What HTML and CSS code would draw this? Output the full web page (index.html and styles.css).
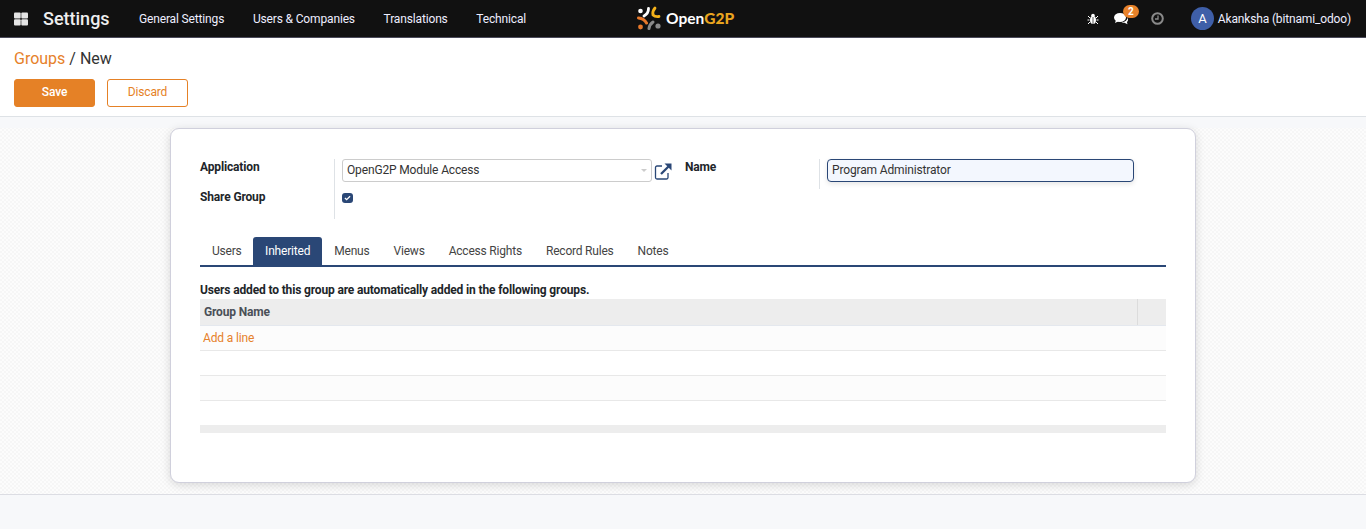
FILE: index.html
```html
<!doctype html>
<html>
	<head>
		<meta charset="utf-8">
		<title>Groups / New</title>
		<link rel="stylesheet" href="styles.css">
	</head>
	<body>
		<!-- Top bar -->
		<header class="navbar">
			<div class="nav-left">
				<svg class="apps-icon" width="16" height="14" viewBox="0 0 16 14"><rect x="1" y="0.500" width="6.700" height="6" rx="1"/><rect x="8.300" y="0.500" width="6.700" height="6" rx="1"/><rect x="1" y="7.300" width="6.700" height="6.200" rx="1"/><rect x="8.300" y="7.300" width="6.700" height="6.200" rx="1"/></svg>
				<span class="app-name">Settings</span>
				<ul class="nav-menu">
					<li>General Settings</li>
					<li>Users &amp; Companies</li>
					<li>Translations</li>
					<li>Technical</li>
				</ul>
			</div>
			<div class="nav-logo">
				<svg width="25" height="24" viewBox="0 0 25 24" fill="none" stroke-linecap="round">
					<circle cx="3.500" cy="5" r="2.300" fill="#fff"/>
					<path d="M11.500 2.500Q11.500 7.500 7 10" stroke="#fff" stroke-width="2.800"/>
					<path d="M18 2Q15 5.500 16 9Q18 11 22 10.500" stroke="#f5b21a" stroke-width="2.800"/>
					<path d="M1.500 12Q7 12.500 9.500 17" stroke="#e8792b" stroke-width="3"/>
					<circle cx="3.500" cy="21" r="2.400" fill="#e8792b"/>
					<path d="M16 16Q12.500 18.500 12 22.500" stroke="#8a8a8a" stroke-width="3"/>
					<circle cx="21" cy="20" r="2.600" fill="#8a8a8a"/>
				</svg>
				<span class="logo-text">Open<b>G2P</b></span>
			</div>
			<div class="nav-right">
				<svg class="bug-icon" width="12" height="12" viewBox="0 0 12 12" fill="#fff"><ellipse cx="6" cy="7" rx="3" ry="4"/><circle cx="6" cy="2.600" r="1.800"/><path d="M1 3l2 2M11 3L9 5M.5 7h2M11.500 7h-2M1 11l2-2M11 11L9 9" stroke="#fff" stroke-width="1"/><path d="M6 4v7" stroke="#111" stroke-width=".7"/></svg>
				<div class="chat">
					<svg width="15" height="13" viewBox="0 0 15 13" fill="#fff"><ellipse cx="6" cy="5.500" rx="6" ry="4.500"/><path d="M2 8 L1 11 L5 9z"/><path d="M13.500 5.500c1 2 .6 3.500-.6 4.500l.6 2.200-3-1.500c-1 .2-2 .1-3-.3 3 0 6-2 6-4.900z"/></svg>
					<span class="badge">2</span>
				</div>
				<svg class="clock-icon" width="13" height="13" viewBox="0 0 13 13" fill="none" stroke="#8a8a8a"><circle cx="6.500" cy="6.500" r="5.300" stroke-width="2"/><path d="M7 3.500v3.500H4" stroke-width="1.300"/></svg>
				<div class="user">
					<span class="avatar">A</span>
					<span>Akanksha (bitnami_odoo)</span>
				</div>
			</div>
		</header>

		<!-- Breadcrumb and buttons -->
		<section class="control-panel">
			<div class="breadcrumb"><a>Groups</a> / New</div>
			<div class="buttons">
				<button class="btn btn-primary">Save</button>
				<button class="btn btn-secondary">Discard</button>
			</div>
		</section>

		<!-- Form -->
		<main class="content">
			<article class="sheet">
				<div class="groups">
					<div class="group group-left">
						<div class="labels">
							<label>Application</label>
							<label>Share Group</label>
						</div>
						<div class="fields">
							<div class="field-line">
								<div class="select">OpenG2P Module Access<i class="caret"></i></div>
								<svg class="ext-link" width="18" height="18" viewBox="0 0 18 18" fill="none" stroke="#2a4776"><path d="M8 4H3a1.500 1.500 0 0 0-1.500 1.500v10A1.500 1.500 0 0 0 3 17h9.500a1.500 1.500 0 0 0 1.500-1.500V11" stroke-width="1.300"/><path d="M7 12L15 4" stroke-width="2.300"/><path d="M10.500 1.500h7v7z" fill="#2a4776" stroke="none"/></svg>
							</div>
							<span class="checkbox"><svg width="7" height="6" viewBox="0 0 8 7" fill="none" stroke="#fff" stroke-width="1.500"><path d="M1 3.500l2 2 4-4"/></svg></span>
						</div>
					</div>
					<div class="group group-right">
						<div class="labels"><label>Name</label></div>
						<div class="fields">
							<input class="name-input" type="text" value="Program Administrator">
						</div>
					</div>
				</div>

				<ul class="tabs">
					<li>Users</li>
					<li class="active">Inherited</li>
					<li>Menus</li>
					<li>Views</li>
					<li>Access Rights</li>
					<li>Record Rules</li>
					<li>Notes</li>
				</ul>

				<p class="tab-note">Users added to this group are automatically added in the following groups.</p>
				<table class="lines">
					<thead>
						<tr><th>Group Name</th><th class="col-trash"></th></tr>
					</thead>
					<tbody>
						<tr><td colspan="2"><a>Add a line</a></td></tr>
						<tr><td colspan="2"></td></tr>
						<tr><td colspan="2"></td></tr>
						<tr><td colspan="2"></td></tr>
					</tbody>
					<tfoot>
						<tr><td colspan="2"></td></tr>
					</tfoot>
				</table>
			</article>
		</main>
		<div class="bottom-strip"></div>
	</body>
</html>
```

FILE: styles.css
```css
* {
	box-sizing: border-box;
	padding: 0px;
	margin: 0px;
}
html, body {
	height: 100%;
	overflow: hidden;
}
body {
	display: flex;
	flex-direction: column;
	background: #fff;
	color: #212529;
	font-family: Roboto, "Liberation Sans", sans-serif;
	font-size: 12px;
	letter-spacing: -0.15px;
}

/* Top bar */
.navbar {
	height: 38px;
	flex: none;
	display: flex;
	align-items: center;
	justify-content: space-between;
	background: #111;
	border-bottom: 1px solid #4a4a5a;
	color: #fff;
	position: relative;
}
.nav-left, .nav-right {
	display: flex;
	align-items: center;
}
.nav-left {
	padding-left: 13px;
}
.apps-icon {
	fill: #e4e4e4;
	margin-right: 14px;
}
.app-name {
	font-size: 18px;
	font-weight: 500;
	letter-spacing: 0px;
	color: #eee;
	width: 96px;
}
.nav-menu {
	list-style-type: none;
	display: flex;
	gap: 28.700px;
	color: #eef;
}
.nav-logo {
	position: absolute;
	left: 637px;
	top: 6px;
	display: flex;
	align-items: center;
	gap: 4px;
}
.logo-text {
	font-family: Lato, sans-serif;
	font-weight: 700;
	font-size: 15.500px;
	letter-spacing: 0px;
	color: #fff;
}
.logo-text b {
	color: #e9a51f;
}
.nav-right {
	padding-right: 15px;
}
.bug-icon {
	margin-right: 15px;
}
.chat {
	position: relative;
	display: flex;
	margin-right: 22px;
	width: 15px;
}
.badge {
	position: absolute;
	left: 9px;
	top: -7px;
	height: 13px;
	min-width: 16px;
	border-radius: 7px;
	background: #e8822a;
	color: #fff;
	font-size: 10px;
	font-weight: 700;
	line-height: 13px;
	text-align: center;
}
.clock-icon {
	margin-right: 27px;
}
.user {
	display: flex;
	align-items: center;
	gap: 4px;
	color: #eef;
}
.avatar {
	width: 23px;
	height: 23px;
	border-radius: 50%;
	background: #3f5fa8;
	color: #fff;
	font-size: 13px;
	line-height: 23px;
	text-align: center;
}

/* Breadcrumb and buttons */
.control-panel {
	height: 79px;
	flex: none;
	padding: 11px 14px 0px;
	background: #fff;
	border-bottom: 1px solid #dee2e6;
}
.breadcrumb {
	font-size: 16px;
	line-height: 19px;
	letter-spacing: 0px;
	color: #333;
}
.breadcrumb a {
	color: #e6812a;
}
.buttons {
	display: flex;
	gap: 12px;
	margin-top: 11px;
}
.btn {
	width: 81px;
	height: 28px;
	padding-bottom: 2px;
	border-radius: 3px;
	font-family: inherit;
	font-size: 12px;
	letter-spacing: inherit;
	background: #fff;
	border: 1px solid #e58126;
	color: #e58126;
}
.btn-primary {
	background: #e58126;
	color: #fff;
	font-weight: 500;
}

/* Form area */
.content {
	flex: 1;
	padding: 11px 0px 11px 170px;
	background:
		linear-gradient(#f7f8fa, #f7f8fa) 0 0 / 100% 11px no-repeat,
		repeating-conic-gradient(#f6f6f6 0 25%, #fcfcfc 0 50%) 0 0 / 4px 4px;
	border-bottom: 1px solid #dcdde3;
}
.sheet {
	width: 1026px;
	height: 355px;
	padding: 30px 29px 0px;
	background: #fff;
	border: 1px solid #d0d0dc;
	border-radius: 9px;
	box-shadow: 0px 2px 10px rgba(0,0,0,0.14);
}
.groups {
	display: flex;
	height: 78px;
}
.group {
	display: flex;
	align-items: flex-start;
}
.group-left {
	width: 485px;
}
.labels {
	width: 134px;
	padding-top: 1px;
	flex: none;
}
.labels label {
	display: block;
	height: 30px;
	line-height: 15px;
	font-weight: 700;
	color: #212529;
}
.fields {
	border-left: 1px solid #dee2e6;
	padding-left: 7px;
}
.group-left .fields {
	height: 60px;
}
.group-right .fields {
	height: 30px;
}
.field-line {
	display: flex;
	align-items: center;
	gap: 2px;
}
.select {
	position: relative;
	width: 310px;
	height: 23px;
	padding-left: 4px;
	border: 1px solid #ccc;
	border-radius: 3px;
	line-height: 20px;
	color: #333;
}
.caret {
	position: absolute;
	right: 4px;
	top: 9px;
	border: 3px solid transparent;
	border-top-color: #ccc;
}
.checkbox {
	display: flex;
	align-items: center;
	justify-content: center;
	width: 11px;
	height: 10px;
	margin-top: 11px;
	border-radius: 3px;
	background: #2a4776;
}
.name-input {
	display: block;
	width: 307px;
	height: 23px;
	padding: 0px 0px 2px 4px;
	border: 1px solid #2a4776;
	border-radius: 4px;
	background: #f3f7fe;
	box-shadow: 0px 2px 5px rgba(0,0,0,0.1);
	font-family: inherit;
	font-size: 12px;
	letter-spacing: inherit;
	color: #333;
	outline: none;
}

/* Tabs */
.tabs {
	list-style-type: none;
	display: flex;
	height: 30px;
	letter-spacing: -0.2px;
	border-bottom: 2px solid #2a4776;
}
.tabs li {
	padding: 0px 12px;
	height: 28px;
	line-height: 29px;
	color: #444;
}
.tabs li:first-child {
	padding-right: 11.500px;
}
.tabs li.active {
	background: #2a4776;
	color: #fff;
	border-radius: 3px 3px 0px 0px;
}
.tab-note {
	margin-top: 17px;
	height: 15px;
	line-height: 12px;
	font-weight: 700;
	color: #212529;
}

/* Table */
.lines {
	width: 100%;
	border-collapse: collapse;
	table-layout: fixed;
}
.lines th {
	height: 26px;
	padding-left: 4px;
	background: #ededed;
	border-bottom: 1px solid #e4e8ee;
	text-align: left;
	font-weight: 700;
	color: #4a4f57;
}
.lines .col-trash {
	width: 29px;
	border-left: 1px solid #dcdcdc;
}
.lines tbody td {
	height: 25px;
	padding-left: 3px;
	border-bottom: 1px solid #e8e8e8;
}
.lines tbody tr:nth-child(odd) td {
	background: #fcfcfc;
}
.lines tbody tr:last-child td {
	border-bottom: 0px;
	background: #fff;
}
.lines tbody a {
	color: #e6812a;
}
.lines tfoot td {
	height: 8px;
	background: #ededed;
}

.bottom-strip {
	height: 34px;
	flex: none;
	background: #f7f8fa;
}
```
